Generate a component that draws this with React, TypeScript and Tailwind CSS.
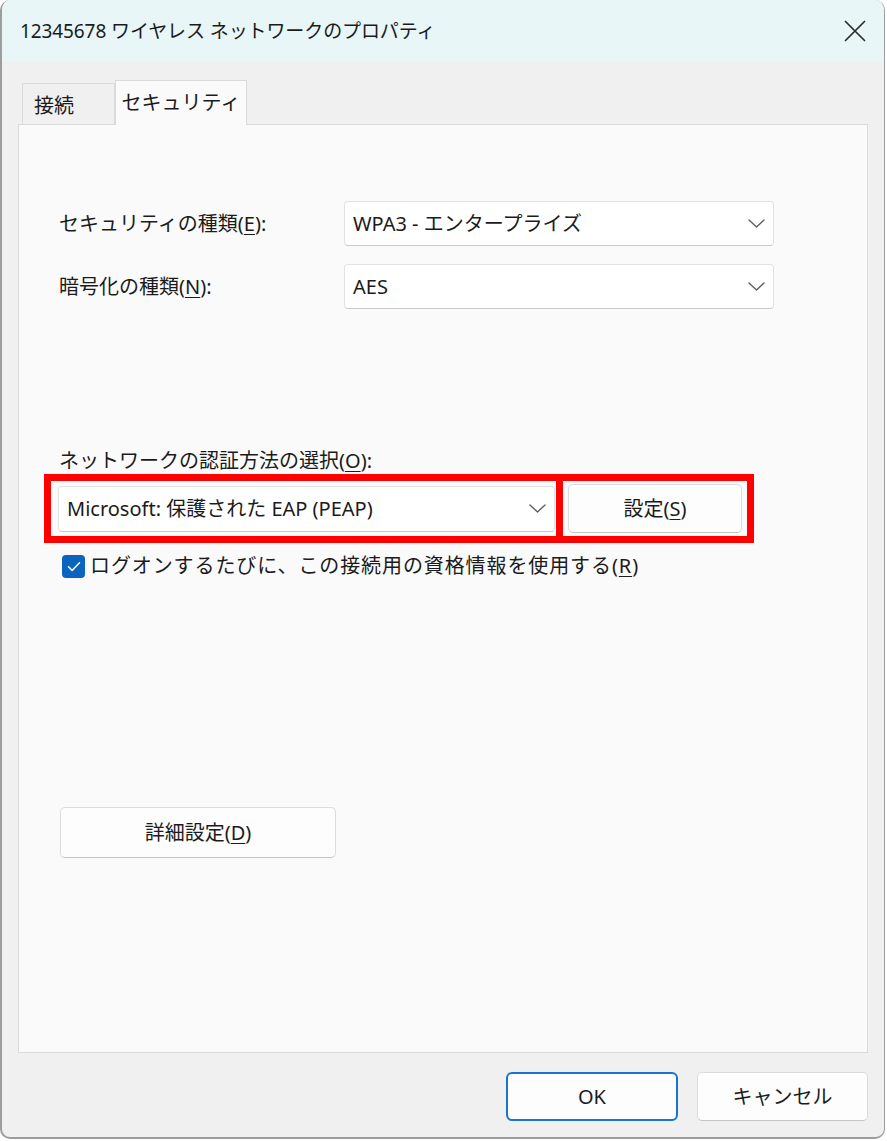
import type { ReactNode } from 'react';

const font = { fontFamily: '"Noto Sans", "Noto Sans CJK JP", sans-serif' };

function Chevron() {
  return (
    <svg width="17" height="9" viewBox="0 0 17 9" fill="none" className="shrink-0">
      <path d="M1 1l7.5 7L16 1" stroke="#5f5f5f" strokeWidth="1.4" strokeLinecap="round" strokeLinejoin="round" />
    </svg>
  );
}

function Select({ value, className }: { value: string; className: string }) {
  return (
    <div
      className={`flex items-center justify-between bg-white border border-[#e2e2e2] border-b-[#c8c8c8] rounded-[4px] pl-[8px] pr-[8px] ${className}`}
    >
      <span className="text-[20px] text-[#1b1b1b] leading-none">{value}</span>
      <Chevron />
    </div>
  );
}

function Button({ children, className }: { children: ReactNode; className: string }) {
  return (
    <div
      className={`flex items-center justify-center bg-[#fdfdfd] border border-[#dcdcdc] border-b-[#c4c4c4] rounded-[5px] text-[20px] text-[#1b1b1b] ${className}`}
    >
      {children}
    </div>
  );
}

function Key({ k }: { k: string }) {
  return <span className="underline underline-offset-[3px] decoration-1">{k}</span>;
}

export default function App() {
  return (
    <div className="w-[887px] h-[1141px] bg-white" style={font}>
      <div className="w-[885px] h-[1139px] flex flex-col border-l-[2px] border-r-[1px] border-b-[2px] border-[#9d9d9d] rounded-t-[10px] rounded-b-[10px] overflow-hidden bg-[#f0f0f0]">
        {/* title bar */}
        <div className="h-[62px] shrink-0 flex items-center justify-between bg-[#e8f6f8] pl-[18px] pr-[18px]">
          <span className="text-[19px] text-[#1b1b1b] tracking-[-0.1px]">12345678 ワイヤレス ネットワークのプロパティ</span>
          <svg width="22" height="22" viewBox="0 0 22 22" fill="none">
            <path d="M1.5 1.5l19 19M20.5 1.5l-19 19" stroke="#2b2b2b" strokeWidth="1.7" strokeLinecap="round" />
          </svg>
        </div>

        <div className="flex-1 flex flex-col px-[16px]">
          {/* tabs */}
          <div className="flex items-end pt-[18px] pl-[4px]">
            <div className="h-[41px] w-[93px] flex items-center border border-b-0 border-[#dadada] bg-[#f0f0f0] text-[20px] text-[#1b1b1b] pt-[4px] pl-[11px]">
              接続
            </div>
            <div className="relative z-10 -mb-px h-[45px] w-[132px] flex items-center justify-center border border-b-0 border-[#dadada] bg-[#fafafa] text-[20px] text-[#1b1b1b]">
              セキュリティ
            </div>
          </div>

          {/* panel */}
          <div className="h-[929px] flex flex-col border border-[#dadada] bg-[#fafafa] pl-[40px]">
            <div className="flex items-center mt-[76px]">
              <span className="w-[285px] text-[20px] text-[#1b1b1b]">
                セキュリティの種類(<Key k="E" />):
              </span>
              <Select value="WPA3 - エンタープライズ" className="w-[430px] h-[45px]" />
            </div>
            <div className="flex items-center mt-[18px]">
              <span className="w-[285px] text-[20px] text-[#1b1b1b]">
                暗号化の種類(<Key k="N" />):
              </span>
              <Select value="AES" className="w-[430px] h-[45px]" />
            </div>

            <div className="mt-[137px] h-[28px] text-[20px] leading-[29px] text-[#1b1b1b] overflow-hidden">
              ネットワークの認証方法の選択(<Key k="O" />):
            </div>

            <div className="flex -ml-[15px]">
              <div className="w-[519px] h-[69px] flex items-center border-[7px] border-[#ff0000] pl-[7px] pr-[1px]">
                <Select value="Microsoft: 保護された EAP (PEAP)" className="w-full h-[46px]" />
              </div>
              <div className="w-[191px] h-[69px] flex items-center border-[7px] border-l-0 border-[#ff0000] pl-[5px] pr-[5px]">
                <Button className="w-full h-[49px]">
                  設定(<Key k="S" />)
                </Button>
              </div>
            </div>

            <div className="flex items-center mt-[8px] ml-[3px]">
              <div className="w-[23px] h-[23px] rounded-[4px] bg-[#0a64c0] flex items-center justify-center">
                <svg width="14" height="11" viewBox="0 0 14 11" fill="none">
                  <path d="M1.5 5.8l3.6 3.6L12.5 1.8" stroke="white" strokeWidth="1.5" strokeLinecap="round" strokeLinejoin="round" />
                </svg>
              </div>
              <span className="ml-[5px] text-[20px] text-[#1b1b1b] tracking-[0.9px]">
                ログオンするたびに、この接続用の資格情報を使用する(<Key k="R" />)
              </span>
            </div>

            <Button className="w-[276px] h-[51px] mt-[226px] ml-[1px]">
              詳細設定(<Key k="D" />)
            </Button>
          </div>

          {/* footer */}
          <div className="flex justify-end gap-[19px] pt-[19px]">
            <div className="w-[172px] h-[49px] flex items-center justify-center bg-[#fdfdfd] border-[2px] border-[#1a73cc] rounded-[6px] text-[20px] text-[#1b1b1b]">
              OK
            </div>
            <Button className="w-[171px] h-[49px]">キャンセル</Button>
          </div>
        </div>
      </div>
    </div>
  );
}
